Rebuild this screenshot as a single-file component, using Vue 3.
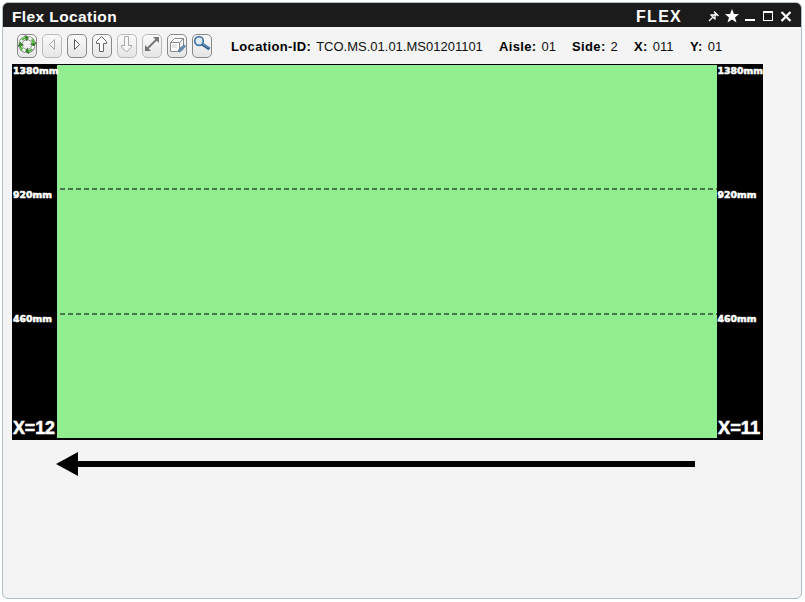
<script setup>
const details = [
  { label: 'Location-ID:', value: 'TCO.MS.01.01.MS01201101', key: 'location' },
  { label: 'Aisle:', value: '01', key: 'aisle' },
  { label: 'Side:', value: '2', key: 'side' },
  { label: 'X:', value: '011', key: 'x' },
  { label: 'Y:', value: '01', key: 'y' },
]
const tools = [
  { name: 'refresh' },
  { name: 'previous', disabled: true },
  { name: 'next' },
  { name: 'up' },
  { name: 'down', disabled: true },
  { name: 'resize', disabled: true },
  { name: 'edit' },
  { name: 'search' },
]
const levels = [
  { text: '1380mm', y: 10, width: 45.5 },
  { text: '920mm', y: 134, width: 39 },
  { text: '460mm', y: 258, width: 39 },
]
</script>

<template>
  <main class="window">
    <header class="titlebar">
      <h1>Flex Location</h1>
      <span class="brand">FLEX</span>
      <div class="controls">
        <svg width="12" height="16" viewBox="0 0 12 16" aria-label="Pin">
          <path d="m6 3.500 4.500 4.500M2.500 6.500l5 5M3 7h3l2-2M7 11V8l2-2M5 9l-4 4" fill="none" stroke="#fff" stroke-width="1.300" />
        </svg>
        <svg width="16" height="16" viewBox="0 0 16 16" aria-label="Favorite">
          <path d="m8 1 2 5h5l-4 3.500 1.500 5L8 11.500 3.500 14.500 5 9.500 1 6h5z" fill="#fff" />
        </svg>
        <svg width="12" height="16" viewBox="0 0 12 16" aria-label="Minimize"><path d="M1 11h10v2H1z" fill="#fff" /></svg>
        <svg width="12" height="16" viewBox="0 0 12 16" aria-label="Maximize"><path d="M1 3h10v10H1zM2 5v7h8V5z" fill="#fff" fill-rule="evenodd" /></svg>
        <svg width="12" height="16" viewBox="0 0 12 16" aria-label="Close"><path d="m1.500 4 9 9m0-9-9 9" stroke="#fff" stroke-width="2.300" /></svg>
      </div>
    </header>

    <div class="toolbar">
      <div class="tools">
        <button v-for="tool in tools" :key="tool.name" :class="{ disabled: tool.disabled }" :aria-label="tool.name">
          <svg width="20" height="24" viewBox="0 0 20 24">
            <g v-if="tool.name === 'refresh'">
              <g v-for="angle in [0, 90, 180, 270]" :key="angle" :transform="`rotate(${angle} 10 10.5)`">
                <path d="M3.500 9A7 7 0 0 1 8.500 4" fill="none" stroke="#777d74" stroke-width="4" />
                <path d="M3.500 9A7 7 0 0 1 8.500 4" fill="none" stroke="#f4f8f2" stroke-width="2.600" />
                <path d="m8 1.500 4.500 2L9.500 7z" fill="#2e8b20" stroke="#445641" stroke-width=".6" />
                <path d="M5 6Q6.500 4 9 3.800" fill="none" stroke="#43b82c" stroke-width="1.800" />
              </g>
            </g>
            <path v-else-if="tool.name === 'previous'" d="M12.500 5.500v10l-5-5z" fill="#fff" stroke="#777" />
            <path v-else-if="tool.name === 'next'" d="M7.500 5.500v10l5-5z" fill="#fff" stroke="#555" />
            <path v-else-if="tool.name === 'up'" d="m9.500 2.500 5 5v2h-3v8h-4v-8h-3v-2z" fill="#fff" stroke="#666" />
            <path v-else-if="tool.name === 'down'" d="M7.500 2.500h4v9h3v1.500l-5 5-5-5v-1.500h3z" fill="#fff" stroke="#777" />
            <g v-else-if="tool.name === 'resize'" fill="#222" stroke="#222">
              <path d="M4 16 16 4" stroke-width="1.800" />
              <path d="M11 3h6v6zM3 11v6h6z" stroke="none" />
            </g>
            <g v-else-if="tool.name === 'edit'">
              <path d="M3.500 8.500h9v9h-9zM3.500 8.500l4-4h9l-4 4m4-4v9l-4 4" fill="#fff" stroke="#888" />
              <path d="M5 11h5m-5 2h5" stroke="#ccc" />
              <path d="m11 17 2-3 4-3 1.500 1-3 4-3 2z" fill="#6c91b0" stroke="#4b6d8a" stroke-width=".7" />
            </g>
            <g v-else fill="none">
              <path d="m10 10 7.500 5" stroke="#315f8d" stroke-width="3.300" />
              <path d="m11 10 6 4" stroke="#79a3c7" />
              <circle cx="7" cy="7" r="4.300" fill="#dfecf4" stroke="#4779a6" stroke-width="1.700" />
            </g>
          </svg>
        </button>
      </div>
      <dl>
        <div v-for="item in details" :key="item.key" :class="item.key">
          <dt>{{ item.label }}</dt><dd>{{ item.value }}</dd>
        </div>
      </dl>
    </div>

    <svg class="rack" width="751" height="376" viewBox="0 0 751 376">
      <rect width="751" height="376" />
      <rect x="45" y="1" width="660" height="373" fill="#90ee90" />
      <path d="M48 125h657M48 250h657" stroke="#487748" stroke-width="2" stroke-dasharray="5 3" />
      <g v-for="x in [1, 705.5]" :key="x" class="levels">
        <text v-for="level in levels" :key="level.text" :x="x" :y="level.y" :textLength="level.width" lengthAdjust="spacingAndGlyphs">{{ level.text }}</text>
      </g>
      <g class="positions">
        <text x="1" y="370" textLength="42" lengthAdjust="spacingAndGlyphs">X=12</text>
        <text x="706" y="370" textLength="42" lengthAdjust="spacingAndGlyphs">X=11</text>
      </g>
    </svg>
    <svg class="direction" width="639" height="24" viewBox="0 0 639 24" aria-label="Direction left">
      <path d="M0 12 22 0v9h617v6H22v9z" />
    </svg>
  </main>
</template>

<style>
body { background: #fff; }
</style>
<style scoped>
.window {
  box-sizing: border-box; width: 800px; height: 597px; margin: 2px;
  overflow: hidden; background: #f4f4f4; border: 1px solid #aebfc8;
  border-radius: 6px; font-family: "Liberation Sans", Arial, sans-serif; color: #000;
}
.titlebar {
  display: flex; align-items: center; height: 25px; margin: -1px -1px 0;
  padding: 0 10px; background: #1b1b1b; color: #fff; box-sizing: border-box;
}
h1, .brand { margin: 0; font-size: 15px; line-height: 25px; font-weight: bold; padding-top: 4px; }
h1 { font-size: 15.500px; letter-spacing: .4px; }
.brand { margin-left: auto; width: 72px; font-size: 16px; letter-spacing: 1.300px; }
.controls { display: flex; gap: 6px; padding-top: 3px; }
.controls svg { display: block; }
.controls svg:nth-child(2) { margin: 0 -2px; }
.toolbar { display: flex; height: 37px; padding: 7px 0 0 14px; box-sizing: border-box; }
.tools { display: flex; gap: 5px; }
button {
  box-sizing: border-box; width: 20px; height: 24px; padding: 0;
  border: 1px solid #888; border-radius: 5px;
  background: linear-gradient(#fafafa, #e5e5e5); overflow: hidden;
}
button svg { display: block; margin: -1px 0 0 -1px; }
button.disabled { border-color: #bbb; }
button.disabled svg { opacity: .6; }
dl { display: flex; margin: 1px 0 0 19px; font-size: 13px; line-height: 24px; white-space: nowrap; }
dl div { display: flex; }
dt { font-weight: bold; letter-spacing: .36px; }
dd { margin: 0 0 0 5px; color: #111; }
.location { width: 268px; }
.aisle { width: 73px; }
.side { width: 62px; }
.x { width: 56px; }
.rack { display: block; margin-left: 9px; }
.levels text { fill: #fff; stroke: #fff; stroke-width: .6px; font: bold 9.500px "DejaVu Sans", sans-serif; }
.positions text { fill: #fff; stroke: #fff; stroke-width: .6px; font: bold 18px "Liberation Sans", Arial, sans-serif; }
.direction { display: block; margin: 12px 0 0 53px; }
</style>
